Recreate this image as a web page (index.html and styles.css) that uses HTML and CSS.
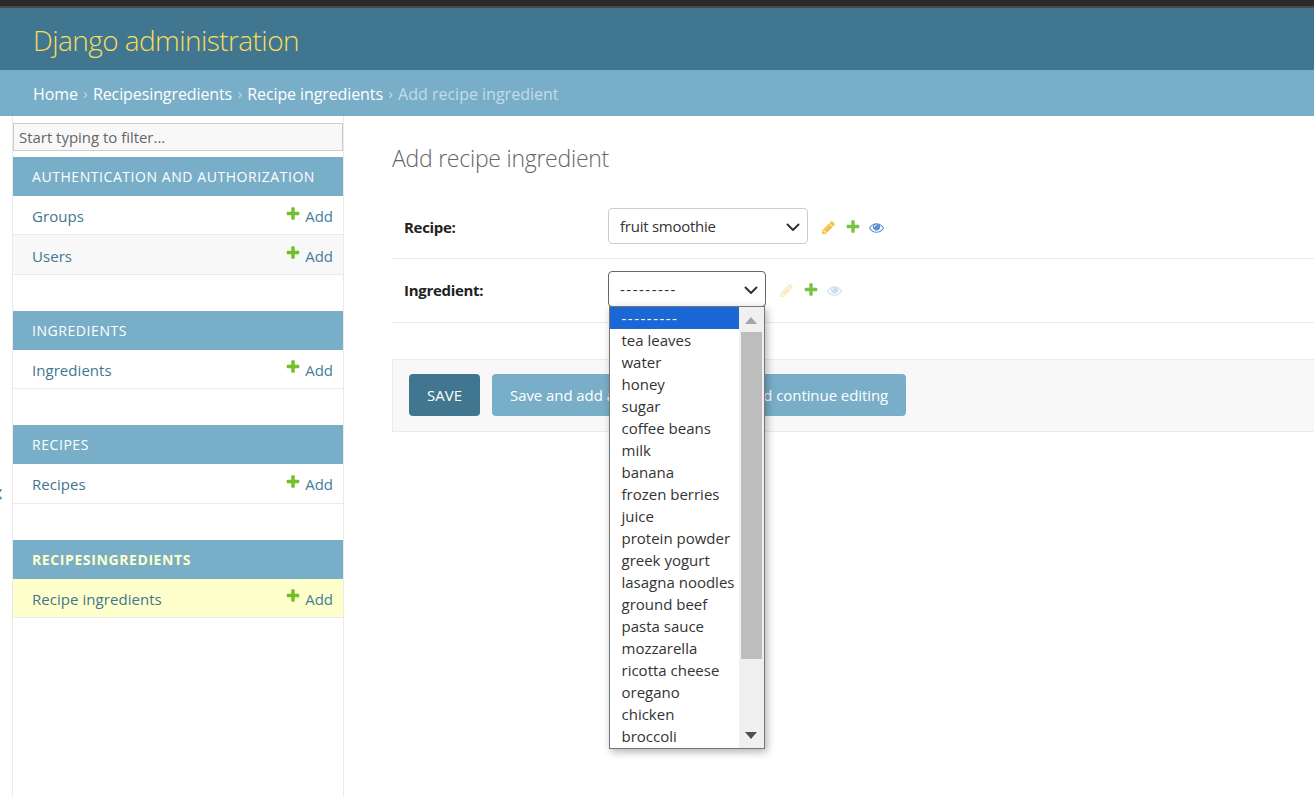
FILE: index.html
```html
<!DOCTYPE html>
<html lang="en">
<head>
<meta charset="utf-8">
<title>Add recipe ingredient | Django site admin</title>
<link rel="stylesheet" href="styles.css">
</head>
<body>
<svg class="defs" width="0" height="0" aria-hidden="true">
  <symbol id="i-plus" viewBox="0 0 1792 1792"><path d="M1600 736v192q0 40-28 68t-68 28h-416v416q0 40-28 68t-68 28h-192q-40 0-68-28t-28-68v-416h-416q-40 0-68-28t-28-68v-192q0-40 28-68t68-28h416v-416q0-40 28-68t68-28h192q40 0 68 28t28 68v416h416q40 0 68 28t28 68z"/></symbol>
  <symbol id="i-pencil" viewBox="0 0 1792 1792"><path d="M491 1536l91-91-235-235-91 91v107h128v128h107zm523-928q0-22-22-22-10 0-17 7l-542 542q-7 7-7 17 0 22 22 22 10 0 17-7l542-542q7-7 7-17zm-54-192l416 416-832 832h-416v-416zm683 96q0 53-37 90l-166 166-416-416 166-165q36-38 90-38 53 0 91 38l235 234q37 39 37 91z"/></symbol>
  <symbol id="i-eye" viewBox="0 0 1792 1792"><path d="M1664 960q-152-236-381-353 61 104 61 225 0 185-131.500 316.500t-316.500 131.500-316.500-131.500-131.500-316.500q0-121 61-225-229 117-381 353 133 205 333.500 326.500t434.500 121.500 434.500-121.500 333.500-326.500zm-720-384q0-20-14-34t-34-14q-125 0-214.500 89.500t-89.500 214.500q0 20 14 34t34 14 34-14 14-34q0-86 61-147t147-61q20 0 34-14t14-34zm848 384q0 34-20 69-140 230-376.500 368.500t-499.500 138.500-499.500-139-376.500-368q-20-35-20-69t20-69q140-229 376.500-368t499.500-139 499.500 139 376.500 368q20 35 20 69z"/></symbol>
  <symbol id="i-chev" viewBox="0 0 16 16"><path d="M2.500 5.500 8 11l5.500-5.500" fill="none" stroke="currentColor" stroke-width="2" stroke-linecap="round" stroke-linejoin="round"/></symbol>
</svg>

<div class="chrome"></div>
<header class="site-header"><h1 class="brand">Django administration</h1></header>
<nav class="crumbs">
  <a href="#">Home</a><span class="sep">›</span><a href="#">Recipesingredients</a><span class="sep">›</span><a href="#">Recipe ingredients</a><span class="sep">›</span><span class="current">Add recipe ingredient</span>
</nav>

<div class="layout">
  <span class="toggle">«</span>
  <aside class="sidebar">
    <input class="filter" type="text" placeholder="Start typing to filter...">

    <section class="module">
      <h2 class="caption">Authentication and Authorization</h2>
      <div class="row"><a class="row-name" href="#">Groups</a><a class="add" href="#"><svg class="add-icon"><use href="#i-plus"/></svg>Add</a></div>
      <div class="row row-alt"><a class="row-name" href="#">Users</a><a class="add" href="#"><svg class="add-icon"><use href="#i-plus"/></svg>Add</a></div>
    </section>

    <section class="module">
      <h2 class="caption">Ingredients</h2>
      <div class="row"><a class="row-name" href="#">Ingredients</a><a class="add" href="#"><svg class="add-icon"><use href="#i-plus"/></svg>Add</a></div>
    </section>

    <section class="module">
      <h2 class="caption">Recipes</h2>
      <div class="row"><a class="row-name" href="#">Recipes</a><a class="add" href="#"><svg class="add-icon"><use href="#i-plus"/></svg>Add</a></div>
    </section>

    <section class="module">
      <h2 class="caption caption-current">Recipesingredients</h2>
      <div class="row row-current"><a class="row-name" href="#">Recipe ingredients</a><a class="add" href="#"><svg class="add-icon"><use href="#i-plus"/></svg>Add</a></div>
    </section>
  </aside>

  <main class="content">
    <h1 class="title">Add recipe ingredient</h1>
    <form class="form">
      <div class="form-row">
        <label class="label">Recipe:</label>
        <div class="select select-recipe"><span>fruit smoothie</span><svg class="chev"><use href="#i-chev"/></svg></div>
        <div class="related">
          <svg class="rel rel-pencil"><use href="#i-pencil"/></svg>
          <svg class="rel rel-plus"><use href="#i-plus"/></svg>
          <svg class="rel rel-eye"><use href="#i-eye"/></svg>
        </div>
      </div>
      <div class="form-row form-row-2">
        <label class="label">Ingredient:</label>
        <div class="select-wrap">
          <div class="select select-ingredient"><span class="dashes">---------</span><svg class="chev"><use href="#i-chev"/></svg></div>
          <div class="dropdown">
            <ul class="options">
              <li class="option option-selected"><span class="dashes">---------</span></li>
              <li class="option">tea leaves</li>
              <li class="option">water</li>
              <li class="option">honey</li>
              <li class="option">sugar</li>
              <li class="option">coffee beans</li>
              <li class="option">milk</li>
              <li class="option">banana</li>
              <li class="option">frozen berries</li>
              <li class="option">juice</li>
              <li class="option">protein powder</li>
              <li class="option">greek yogurt</li>
              <li class="option">lasagna noodles</li>
              <li class="option">ground beef</li>
              <li class="option">pasta sauce</li>
              <li class="option">mozzarella</li>
              <li class="option">ricotta cheese</li>
              <li class="option">oregano</li>
              <li class="option">chicken</li>
              <li class="option">broccoli</li>
            </ul>
            <div class="scrollbar">
              <span class="arrow arrow-up"></span>
              <span class="thumb"></span>
              <span class="arrow arrow-down"></span>
            </div>
          </div>
        </div>
        <div class="related">
          <svg class="rel rel-pencil rel-off"><use href="#i-pencil"/></svg>
          <svg class="rel rel-plus"><use href="#i-plus"/></svg>
          <svg class="rel rel-eye rel-off"><use href="#i-eye"/></svg>
        </div>
      </div>
      <div class="submit-row">
        <button class="btn btn-default" type="button">SAVE</button>
        <button class="btn btn-2" type="button">Save and add another</button>
        <button class="btn btn-3" type="button">Save and continue editing</button>
      </div>
    </form>
  </main>
</div>
</body>
</html>
```

FILE: styles.css
```css
* { box-sizing: border-box; }
html, body { margin: 0; padding: 0; height: 100%; overflow: hidden; }
body {
  background: #fff;
  color: #333;
  font-family: "Open Sans", "Noto Sans", sans-serif;
  font-size: 15px;
  display: flex;
  flex-direction: column;
}
.defs { position: absolute; }
a { text-decoration: none; color: inherit; }

.chrome { height: 8px; flex: none; background: #2a2a2a; border-bottom: 2px solid #4a4a4a; }

.site-header {
  flex: none;
  height: 62px;
  background: #417690;
  padding: 2px 33px 0;
  display: flex;
  align-items: center;
}
.brand { margin: 0; font-size: 28px; font-weight: 300; color: #f5dd5d; letter-spacing: -0.57px; }

.crumbs {
  flex: none;
  height: 46px;
  background: #79aec8;
  padding: 1px 33px 0;
  display: flex;
  align-items: center;
  font-size: 16px;
  color: #fff;
  letter-spacing: -0.1px;
}
.sep { margin: 0 5.5px; color: #c4dce8; font-size: 14px; }
.current { color: #c4dce8; letter-spacing: 0; }

.layout { flex: 1; display: flex; position: relative; min-height: 0; }
.toggle { position: absolute; left: -10px; top: 357px; font-size: 26px; color: #447e9b; }

.sidebar {
  flex: none;
  width: 332px;
  margin-left: 12px;
  border-left: 1px solid #eaeaea;
  border-right: 1px solid #eaeaea;
  padding-top: 7px;
}
.filter {
  display: block;
  width: 100%;
  height: 28px;
  margin: 0 0 6px;
  padding: 0 5px;
  border: 1px solid #ccc;
  background: #f8f8f8;
  font: inherit;
  font-size: 15px;
  letter-spacing: -0.03px;
}
.filter::placeholder { color: #666; opacity: 1; }

.module { margin-bottom: 36px; }
.caption {
  margin: 0;
  height: 39px;
  padding: 0 19px;
  display: flex;
  align-items: center;
  background: #79aec8;
  color: #fff;
  font-size: 14px;
  font-weight: 400;
  text-transform: uppercase;
  letter-spacing: 0.56px;
}
.caption-current { color: #ffffcc; font-weight: 700; letter-spacing: 0.6px; }

.row {
  height: 39.4px;
  padding: 2px 10px 0 19px;
  display: flex;
  align-items: center;
  justify-content: space-between;
  border-bottom: 1px solid #eaeaea;
  color: #447e9b;
  font-weight: 500;
}
.row-alt { background: #f8f8f8; }
.row-current { background: #ffc; }
.row-name { color: #417690; letter-spacing: 0.05px; }
.add { display: flex; align-items: center; color: #447e9b; font-weight: 400; }
.add-icon { width: 16px; height: 16px; fill: #70bf2b; margin: -5px 4px 0 -2px; }

.content { flex: 1; padding: 0 0 0 48px; min-width: 0; }
.title {
  margin: 27px 0 23px;
  font-size: 23px;
  line-height: 30px;
  font-weight: 300;
  color: #666;
  letter-spacing: -0.25px;
}
.form-row {
  height: 63px;
  display: flex;
  align-items: flex-start;
  border-bottom: 1px solid #eaeaea;
  padding: 12px 0 0 12px;
}
.form-row-2 { height: 64px; }
.label { width: 204px; flex: none; line-height: 38px; font-weight: 700; color: #222; letter-spacing: -0.3px; }
.select-wrap { position: relative; }
.select {
  height: 36px;
  display: flex;
  align-items: center;
  justify-content: space-between;
  padding: 0 6px 0 11px;
  border: 1px solid #ccc;
  border-radius: 4px;
  background: #fff;
  color: #333;
  letter-spacing: -0.25px;
}
.select-recipe { width: 200px; }
.select-ingredient { width: 158px; border-color: #666; }
.dashes { letter-spacing: 1.5px; }
.chev { width: 16px; height: 16px; margin-top: 1px; color: #333; }
.related { height: 38px; display: flex; align-items: center; margin-left: 13px; }
.rel { width: 15px; height: 15px; margin-right: 9.5px; }
.rel-pencil { fill: #f2bf3e; }
.rel-plus { fill: #78c244; width: 16px; height: 16px; margin: 0 8.5px 0 -1px; }
.rel-eye { fill: #5f91d0; }
.rel-off { opacity: 0.3; }

.dropdown {
  position: absolute;
  z-index: 5;
  top: 35px;
  left: 1px;
  width: 156px;
  height: 443px;
  display: flex;
  background: #fff;
  border: 1px solid #767676;
  box-shadow: 2px 3px 8px rgba(0, 0, 0, 0.3);
}
.options { list-style: none; margin: 0; padding: 0; flex: 1; min-width: 0; }
.option {
  height: 22px;
  padding-left: 11.5px;
  line-height: 22px;
  white-space: nowrap;
  overflow: hidden;
  color: #333;
}
.option-selected { background: #1a68d6; color: #fff; }
.scrollbar {
  flex: none;
  width: 25px;
  background: #f0f0f0;
  position: relative;
}
.thumb { position: absolute; top: 25px; left: 2px; width: 21px; height: 327px; background: #bdbdbd; }
.arrow { position: absolute; left: 6px; width: 0; height: 0; border-left: 6px solid transparent; border-right: 6px solid transparent; }
.arrow-up { top: 10px; border-bottom: 7px solid #a5a5a5; }
.arrow-down { top: 425px; border-top: 7px solid #505050; }

.submit-row {
  margin-top: 36px;
  height: 73px;
  display: flex;
  align-items: flex-start;
  gap: 12px;
  padding: 14px 0 0 16px;
  background: #f8f8f8;
  border: 1px solid #eaeaea;
  border-right: 0;
}
.btn {
  height: 42px;
  padding: 0 18px;
  border: 0;
  border-radius: 4px;
  background: #79aec8;
  color: #fff;
  font: inherit;
  letter-spacing: -0.07px;
}
.btn-default { background: #417690; text-transform: uppercase; letter-spacing: 0; }
```
